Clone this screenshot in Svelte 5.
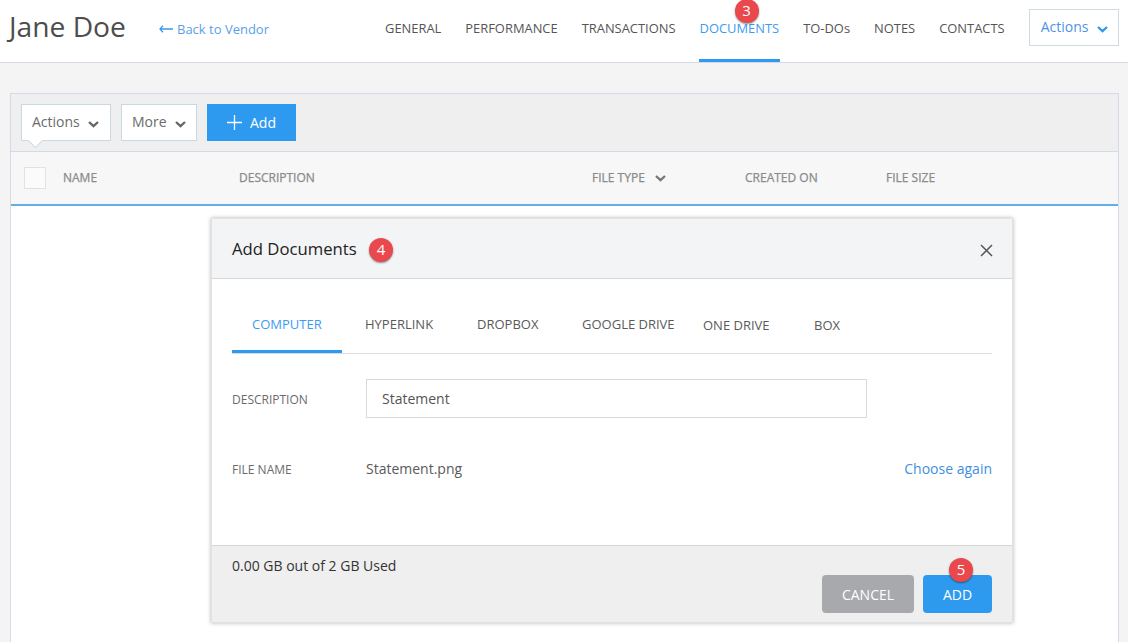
<script>
  const nav = ['GENERAL','PERFORMANCE','TRANSACTIONS','DOCUMENTS','TO-DOs','NOTES','CONTACTS'];
  const tabs = ['COMPUTER','HYPERLINK','DROPBOX','GOOGLE DRIVE','ONE DRIVE','BOX'];
</script>

<div class="page">
  <header class="top">
    <h1>Jane Doe</h1>
    <a class="back"><svg width="14" height="8" viewBox="0 0 14 8"><path d="M4 .8 1 4l3 3.2M1 4h13" fill="none" stroke="#3d97ee" stroke-width="1.3"/></svg>Back to Vendor</a>
    <nav>
      {#each nav as n}
        <a class="nav-item" class:active={n === 'DOCUMENTS'}>
          {n}
          {#if n === 'DOCUMENTS'}<span class="badge nav-badge">3</span>{/if}
        </a>
      {/each}
    </nav>
    <button class="actions-top">Actions
      <svg class="chev" width="11" height="7" viewBox="0 0 11 7"><path d="M1 1 5.5 5.2 10 1" fill="none" stroke="#2d9af0" stroke-width="2.3"/></svg>
    </button>
  </header>

  <main class="content">
    <section class="panel">
      <div class="toolbar">
        <button class="tool actions-btn">Actions
          <svg width="11" height="7" viewBox="0 0 11 7"><path d="M1 1 5.5 5.2 10 1" fill="none" stroke="#666" stroke-width="2.3"/></svg>
        </button>
        <button class="tool more-btn">More
          <svg width="11" height="7" viewBox="0 0 11 7"><path d="M1 1 5.5 5.2 10 1" fill="none" stroke="#666" stroke-width="2.3"/></svg>
        </button>
        <button class="add-btn">
          <svg width="15" height="15" viewBox="0 0 15 15"><path d="M7.5 0v15M0 7.5h15" stroke="#fff" stroke-width="1.3"/></svg>
          Add
        </button>
      </div>
      <div class="thead">
        <span class="check"></span>
        <span class="c-name">NAME</span>
        <span class="c-desc">DESCRIPTION</span>
        <span class="c-type">FILE TYPE
          <svg width="11" height="7" viewBox="0 0 11 7"><path d="M1 1 5.5 5.2 10 1" fill="none" stroke="#777" stroke-width="2.3"/></svg>
        </span>
        <span class="c-created">CREATED ON</span>
        <span class="c-size">FILE SIZE</span>
      </div>
      <div class="tbody"></div>
    </section>
  </main>

  <div class="modal">
    <div class="m-head">
      <span class="m-title">Add Documents</span>
      <span class="badge m-badge">4</span>
      <svg class="close" width="13" height="13" viewBox="0 0 13 13"><path d="M1 1l11 11M12 1 1 12" stroke="#555" stroke-width="1.5"/></svg>
    </div>
    <div class="m-body">
      <div class="tabs">
        {#each tabs as t, i}
          <span class="tab tab-{i}" class:active={i === 0}>{t}</span>
        {/each}
      </div>
      <div class="row desc-row">
        <span class="label">DESCRIPTION</span>
        <input class="input" value="Statement" />
      </div>
      <div class="row file-row">
        <span class="label">FILE NAME</span>
        <span class="fname">Statement.png</span>
        <a class="choose">Choose again</a>
      </div>
    </div>
    <div class="m-foot">
      <span class="used">0.00 GB out of 2 GB Used</span>
      <div class="btns">
        <button class="cancel">CANCEL</button>
        <button class="add">ADD<span class="badge add-badge">5</span></button>
      </div>
    </div>
  </div>
</div>

<style>
  :global(body) { margin: 0; font-family: "Open Sans", sans-serif; background: #f4f4f4; }
  .page { position: relative; width: 1128px; height: 642px; overflow: hidden; background: #f4f4f4; }
  button { font-family: inherit; cursor: pointer; }

  .top { box-sizing: border-box; height: 63px; background: #fff; border-bottom: 1px solid #d3dce6; display: flex; align-items: flex-start; padding-left: 9px; }
  h1 { margin: 8px 0 0; font-size: 28.2px; line-height: 37px; font-weight: 400; color: #4d4d4d; width: 150px; }
  .back { display: flex; align-items: center; gap: 4px; margin-top: 20px; font-size: 13px; line-height: 18px; color: #5a9fe8; width: 225px; }
  nav { display: flex; gap: 22px; }
  .nav-item { position: relative; box-sizing: border-box; height: 62px; padding: 20px 1px 0; font-size: 12.92px; line-height: 17px; color: #555; white-space: nowrap; }
  .nav-item.active { color: #3d9bf0; border-bottom: 3px solid #2d9af0; }
  .badge { position: absolute; box-sizing: border-box; width: 24px; height: 24px; border-radius: 50%; background: #e9484d; color: #fff; font-size: 15px; line-height: 23px; text-align: center; box-shadow: 0 1px 2px rgba(0,0,0,.45); }
  .nav-badge { left: 36px; top: -1px; }
  .actions-top { box-sizing: border-box; width: 90px; height: 37px; margin: 9px 0 0 23px; padding: 0 0 3px 11px; background: #fff; border: 1px solid #cfdbe3; color: #4d94e8; font-size: 14px; text-align: left; }
  .actions-top .chev { margin-left: 5px; vertical-align: -1px; }

  .content { padding: 30px 10px 0; }
  .panel { box-sizing: border-box; width: 1109px; height: 549px; border: 1px solid #d3dce6; border-bottom: 0; background: #fff; }
  .toolbar { box-sizing: border-box; height: 58px; background: #efefef; border-bottom: 1px solid #d3dce6; padding: 10px 0 0 10px; display: flex; gap: 10px; align-items: flex-start; }
  .tool { position: relative; box-sizing: border-box; height: 37px; background: #fff; border: 1px solid #c9d9e3; color: #6b6b6b; font-size: 14px; padding: 0 0 3px 10px; text-align: left; }
  .tool svg { margin-left: 5px; vertical-align: -1px; }
  .actions-btn { width: 90px; }
  .actions-btn::after { content: ""; position: absolute; left: 8px; bottom: -6px; width: 10px; height: 10px; background: #fff; border-right: 1px solid #c9d9e3; border-bottom: 1px solid #c9d9e3; transform: rotate(45deg); }
  .more-btn { width: 76px; }
  .add-btn { box-sizing: border-box; width: 89px; height: 37px; background: #2d9af0; border: 0; color: #fff; font-size: 14px; display: flex; align-items: center; gap: 8px; padding: 0 0 0 20px; }
  .thead { box-sizing: border-box; height: 54px; background: #f7f7f7; border-bottom: 2px solid #62aeea; display: grid; grid-template-columns: 13px 22px 17px 176px 353px 153px 141px 1fr; align-items: center; font-size: 12px; color: #8a8a8a; }
  .check { grid-column: 2; box-sizing: border-box; width: 22px; height: 22px; background: #fbfbfb; border: 1px solid #dde3e8; }
  .c-name { grid-column: 4; }
  .c-desc { grid-column: 5; }
  .c-type { grid-column: 6; }
  .c-type svg { margin-left: 7px; }
  .c-created { grid-column: 7; }
  .c-size { grid-column: 8; }
  .thead span:not(.check) { font-weight: 400; -webkit-text-stroke: .25px #8a8a8a; margin-bottom: 2px; }
  .tbody { height: 100%; background: #fff; }

  .modal { position: absolute; left: 212px; top: 219px; box-sizing: border-box; width: 800px; height: 403px; background: #fff; box-shadow: 0 0 0 1px #e2e2e2, 0 0 4px 1px rgba(0,0,0,.3); display: flex; flex-direction: column; }
  .m-head { position: relative; box-sizing: border-box; height: 60px; background: #f3f4f6; border-bottom: 1px solid #d5d7da; padding: 19px 20px 0; }
  .m-title { font-size: 16.7px; line-height: 22px; color: #222; }
  .m-badge { left: 157px; top: 19px; }
  .close { position: absolute; left: 768px; top: 25px; }
  .m-body { flex: 1; padding: 0 20px; }
  .tabs { position: relative; height: 74px; border-bottom: 1px solid #d9dde3; }
  .tab { position: absolute; top: 37px; font-size: 13px; line-height: 17px; color: #5a5a5a; white-space: nowrap; }
  .tab.active { color: #3d9bf0; }
  .tab.active::after { content: ""; position: absolute; left: -20px; width: 110px; bottom: -20px; height: 3px; background: #2d9af0; }
  .tab-0 { left: 20px; }
  .tab-1 { left: 133px; }
  .tab-2 { left: 245px; }
  .tab-3 { left: 350px; }
  .tab-4 { left: 471px; top: 38px; }
  .tab-5 { left: 582px; top: 38px; }
  .row { display: flex; align-items: center; }
  .label { width: 134px; font-size: 12px; color: #6b6b6b; flex: none; margin-top: 2px; }
  .desc-row { margin-top: 25px; }
  .input { box-sizing: border-box; width: 501px; height: 39px; border: 1px solid #d5dade; padding: 0 15px; font: 14px "Open Sans", sans-serif; color: #555; outline: none; }
  .file-row { margin-top: 40px; height: 20px; }
  .fname { font-size: 14px; color: #5a5a5a; }
  .choose { margin-left: auto; font-size: 14px; color: #3d8fe0; }
  .m-foot { position: relative; flex: none; box-sizing: border-box; height: 77px; background: #efefef; border-top: 1px solid #d5d5d5; padding: 10px 20px 0; }
  .used { font-size: 14px; line-height: 19px; color: #333; display: block; }
  .btns { position: absolute; right: 20px; top: 29px; display: flex; gap: 9px; }
  .cancel, .add { position: relative; box-sizing: border-box; height: 38px; border: 0; border-radius: 4px; color: #fff; font-size: 14px; padding: 0; }
  .cancel { width: 92px; background: #a7a9ac; }
  .add { width: 69px; background: #2d9af0; }
  .add-badge { left: 26px; top: -17px; }
</style>
